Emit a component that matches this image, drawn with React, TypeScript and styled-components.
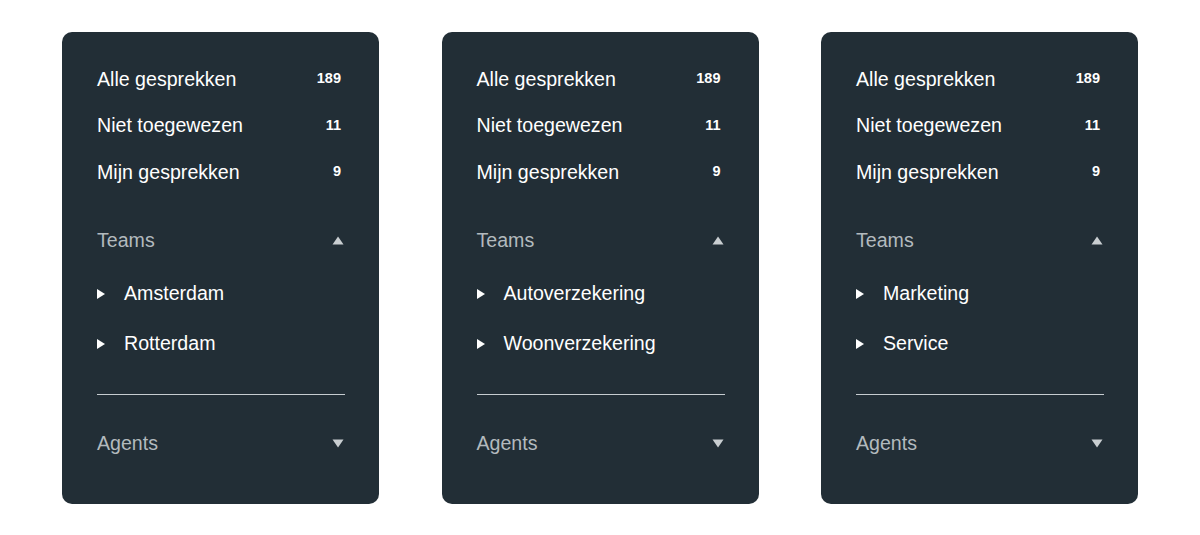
import React from "react";
import styled, { createGlobalStyle } from "styled-components";

const Global = createGlobalStyle`
  html, body { margin: 0; padding: 0; background: #ffffff; }
  body { font-family: "Liberation Sans", Arial, Helvetica, sans-serif; }
`;

const Page = styled.div`
  display: flex;
  justify-content: center;
  gap: 62.5px;
  padding-top: 32px;
`;

const Panel = styled.nav`
  width: 317px;
  height: 472px;
  box-sizing: border-box;
  background: #222e36;
  border-radius: 10px;
  padding: 24px 34px 0 35px;
  display: flex;
  flex-direction: column;
`;

const Row = styled.div`
  height: 46.5px;
  display: flex;
  align-items: center;
  justify-content: space-between;
  color: #ffffff;
  font-size: 19.6px;
`;

const Count = styled.span`
  font-size: 14.5px;
  font-weight: 700;
  margin-right: 4px;
  margin-top: -2px;
`;

const SectionHeader = styled.div<{ $top: number }>`
  height: 46px;
  margin-top: ${(p) => p.$top}px;
  display: flex;
  align-items: center;
  justify-content: space-between;
  color: #b3babe;
  font-size: 19.6px;
`;

const Caret = styled.svg`
  width: 12px;
  height: 9px;
  margin-right: 1px;
  fill: #c9ced1;
`;

const TeamList = styled.div`
  margin-top: 5px;
  display: flex;
  flex-direction: column;
`;

const TeamRow = styled.div`
  height: 50px;
  display: flex;
  align-items: center;
  color: #ffffff;
  font-size: 19.6px;
`;

const Arrow = styled.svg`
  width: 8px;
  height: 10px;
  fill: #ffffff;
  margin-right: 19px;
  margin-top: 1px;
  flex-shrink: 0;
`;

const Divider = styled.hr`
  margin: 26px 0 0 0;
  border: none;
  height: 1px;
  background: #c6ccd0;
`;

type PanelData = { teams: string[] };

const panels: PanelData[] = [
  { teams: ["Amsterdam", "Rotterdam"] },
  { teams: ["Autoverzekering", "Woonverzekering"] },
  { teams: ["Marketing", "Service"] },
];

const UpCaret = () => (
  <Caret viewBox="0 0 12 9">
    <polygon points="6,0.5 11.5,8.5 0.5,8.5" />
  </Caret>
);

const DownCaret = () => (
  <Caret viewBox="0 0 12 9">
    <polygon points="0.5,0.5 11.5,0.5 6,8.5" />
  </Caret>
);

const RightArrow = () => (
  <Arrow viewBox="0 0 8 10">
    <polygon points="0,0 8,5 0,10" />
  </Arrow>
);

const Sidebar = ({ teams }: PanelData) => (
  <Panel>
    <Row>
      <span>Alle gesprekken</span>
      <Count>189</Count>
    </Row>
    <Row>
      <span>Niet toegewezen</span>
      <Count>11</Count>
    </Row>
    <Row>
      <span>Mijn gesprekken</span>
      <Count>9</Count>
    </Row>
    <SectionHeader $top={21.5}>
      <span>Teams</span>
      <UpCaret />
    </SectionHeader>
    <TeamList>
      {teams.map((t) => (
        <TeamRow key={t}>
          <RightArrow />
          <span>{t}</span>
        </TeamRow>
      ))}
    </TeamList>
    <Divider />
    <SectionHeader $top={25}>
      <span>Agents</span>
      <DownCaret />
    </SectionHeader>
  </Panel>
);

export default function App() {
  return (
    <>
      <Global />
      <Page>
        {panels.map((p, i) => (
          <Sidebar key={i} teams={p.teams} />
        ))}
      </Page>
    </>
  );
}
